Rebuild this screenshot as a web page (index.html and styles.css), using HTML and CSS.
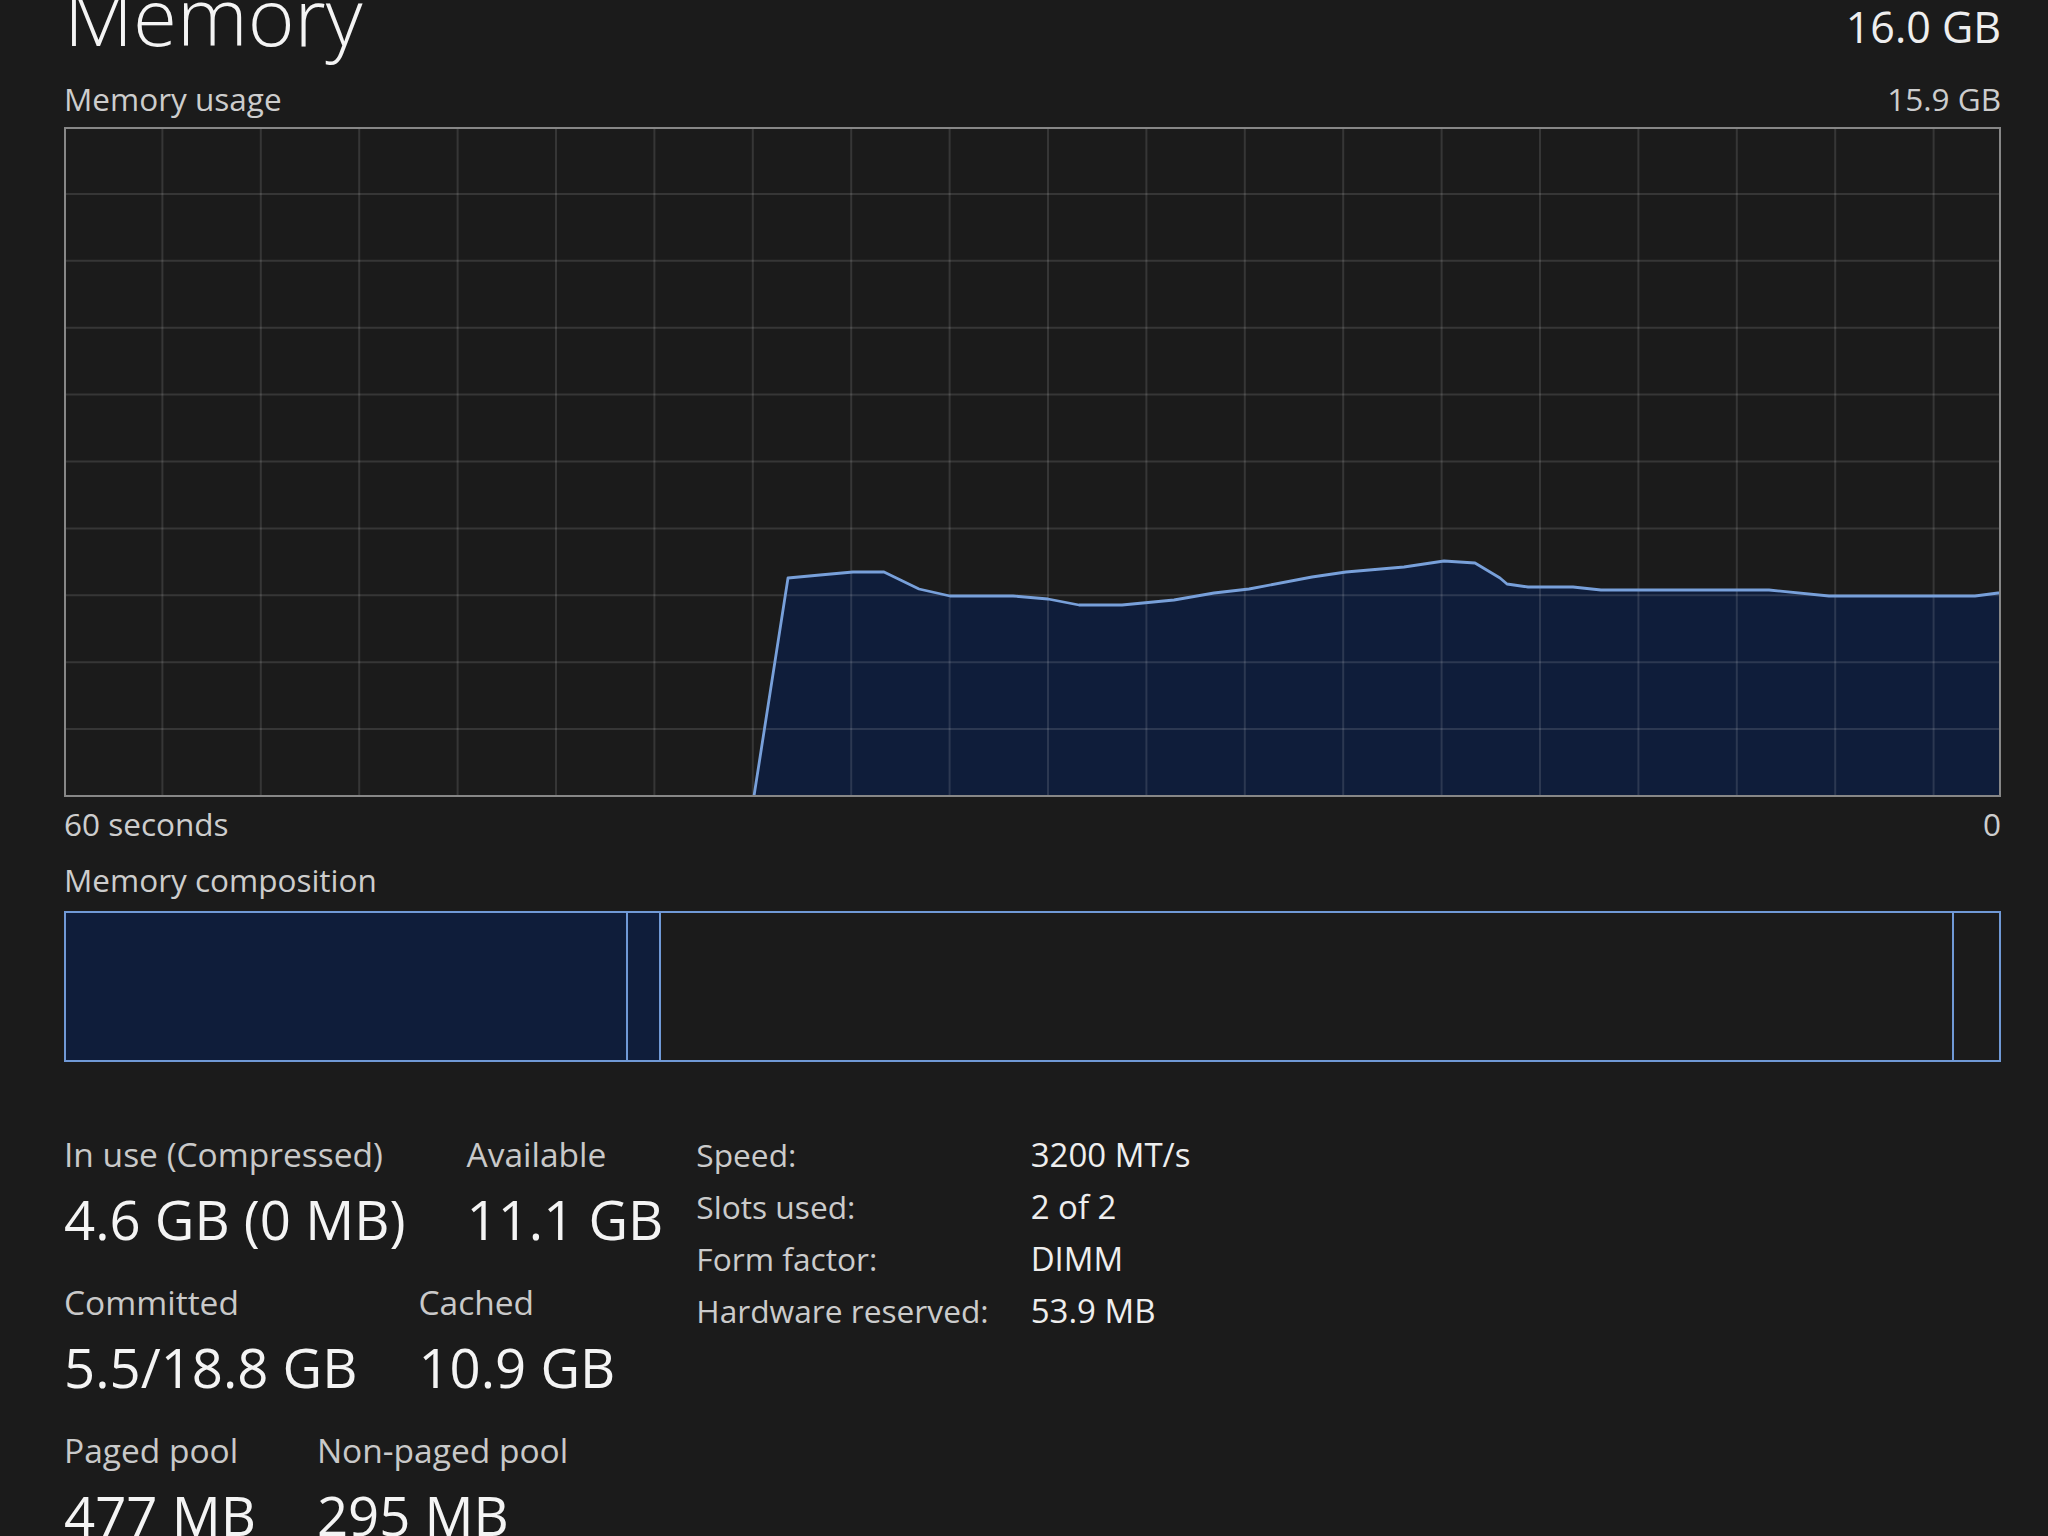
FILE: index.html
```html
<!DOCTYPE html>
<html lang="en">
<head>
<meta charset="utf-8">
<title>Memory</title>
<link rel="stylesheet" href="styles.css">
</head>
<body>
<div class="page">
  <header class="head">
    <h1 class="title">Memory</h1>
    <div class="total">16.0 GB</div>
  </header>

  <div class="axis-row usage-head">
    <span>Memory usage</span>
    <span>15.9 GB</span>
  </div>

  <svg class="chart" width="1937" height="670" viewBox="0 0 1937 670" xmlns="http://www.w3.org/2000/svg">
    <polygon class="area" points="690,669 724,451 756,448 789,445 820,445 855,462 886,469 949,469 984,472 1015,478 1058,478 1110,473 1150,466 1185,462 1248,450 1282,445 1340,440 1380,434 1411,436 1436,451 1443,457 1464,460 1509,460 1537,463 1705,463 1765,469 1911,469 1934,466 1936,466 1936,669"/>
    <g class="grid">
      <line x1="98.4" y1="2" x2="98.4" y2="668"/>
      <line x1="196.8" y1="2" x2="196.8" y2="668"/>
      <line x1="295.2" y1="2" x2="295.2" y2="668"/>
      <line x1="393.6" y1="2" x2="393.6" y2="668"/>
      <line x1="492" y1="2" x2="492" y2="668"/>
      <line x1="590.4" y1="2" x2="590.4" y2="668"/>
      <line x1="688.8" y1="2" x2="688.8" y2="668"/>
      <line x1="787.2" y1="2" x2="787.2" y2="668"/>
      <line x1="885.6" y1="2" x2="885.6" y2="668"/>
      <line x1="984" y1="2" x2="984" y2="668"/>
      <line x1="1082.4" y1="2" x2="1082.4" y2="668"/>
      <line x1="1180.8" y1="2" x2="1180.8" y2="668"/>
      <line x1="1279.2" y1="2" x2="1279.2" y2="668"/>
      <line x1="1377.6" y1="2" x2="1377.6" y2="668"/>
      <line x1="1476" y1="2" x2="1476" y2="668"/>
      <line x1="1574.4" y1="2" x2="1574.4" y2="668"/>
      <line x1="1672.8" y1="2" x2="1672.8" y2="668"/>
      <line x1="1771.2" y1="2" x2="1771.2" y2="668"/>
      <line x1="1869.6" y1="2" x2="1869.6" y2="668"/>
      <line x1="2" y1="66.9" x2="1935" y2="66.9"/>
      <line x1="2" y1="133.8" x2="1935" y2="133.8"/>
      <line x1="2" y1="200.7" x2="1935" y2="200.7"/>
      <line x1="2" y1="267.6" x2="1935" y2="267.6"/>
      <line x1="2" y1="334.5" x2="1935" y2="334.5"/>
      <line x1="2" y1="401.4" x2="1935" y2="401.4"/>
      <line x1="2" y1="468.3" x2="1935" y2="468.3"/>
      <line x1="2" y1="535.2" x2="1935" y2="535.2"/>
      <line x1="2" y1="602.1" x2="1935" y2="602.1"/>
    </g>
    <polyline class="trace" points="690,669 724,451 756,448 789,445 820,445 855,462 886,469 949,469 984,472 1015,478 1058,478 1110,473 1150,466 1185,462 1248,450 1282,445 1340,440 1380,434 1411,436 1436,451 1443,457 1464,460 1509,460 1537,463 1705,463 1765,469 1911,469 1934,466 1936,466"/>
    <rect class="frame" x="1" y="1" width="1935" height="668"/>
  </svg>

  <div class="axis-row time-row">
    <span>60 seconds</span>
    <span>0</span>
  </div>

  <div class="axis-row comp-head">
    <span>Memory composition</span>
  </div>

  <div class="composition">
    <div class="seg seg-filled" style="width:562px"></div>
    <div class="seg seg-filled" style="width:33px"></div>
    <div class="seg" style="width:1293px"></div>
    <div class="seg seg-last"></div>
  </div>

  <section class="stats">
    <div class="stats-left">
      <div class="stat-row">
        <div class="stat">
          <div class="stat-label">In use (Compressed)</div>
          <div class="stat-value">4.6 GB (0 MB)</div>
        </div>
        <div class="stat">
          <div class="stat-label">Available</div>
          <div class="stat-value">11.1 GB</div>
        </div>
      </div>
      <div class="stat-row">
        <div class="stat">
          <div class="stat-label">Committed</div>
          <div class="stat-value">5.5/18.8 GB</div>
        </div>
        <div class="stat">
          <div class="stat-label">Cached</div>
          <div class="stat-value">10.9 GB</div>
        </div>
      </div>
      <div class="stat-row">
        <div class="stat">
          <div class="stat-label">Paged pool</div>
          <div class="stat-value">477 MB</div>
        </div>
        <div class="stat">
          <div class="stat-label">Non-paged pool</div>
          <div class="stat-value">295 MB</div>
        </div>
      </div>
    </div>

    <div class="info">
      <div class="info-label">Speed:</div>
      <div class="info-value">3200 MT/s</div>
      <div class="info-label">Slots used:</div>
      <div class="info-value">2 of 2</div>
      <div class="info-label">Form factor:</div>
      <div class="info-value">DIMM</div>
      <div class="info-label">Hardware reserved:</div>
      <div class="info-value">53.9 MB</div>
    </div>
  </section>
</div>
</body>
</html>
```

FILE: styles.css
```css
html, body {
  margin: 0;
  padding: 0;
  background: #1b1b1b;
  height: 100%;
  overflow: hidden;
}

body {
  font-family: "Open Sans", "Noto Sans", sans-serif;
  color: #f2f2f2;
}

.page {
  padding: 0 47px 0 64px;
  display: flex;
  flex-direction: column;
}

.head {
  display: flex;
  justify-content: space-between;
  align-items: flex-start;
  height: 79px;
}

.title {
  margin: 0;
  font-size: 80px;
  font-weight: 300;
  line-height: 30px;
  color: #f4f4f4;
}

.total {
  font-size: 43px;
  line-height: 53px;
  color: #eeeeee;
}

.axis-row {
  display: flex;
  justify-content: space-between;
  font-size: 31.5px;
  line-height: 39px;
  color: #cdcdcd;
}

.chart {
  display: block;
  margin-top: 9px;
}

.chart .area {
  fill: #0f1d3a;
}

.chart .grid line {
  stroke: rgba(255, 255, 255, 0.12);
  stroke-width: 2;
}

.chart .trace {
  fill: none;
  stroke: #78a0da;
  stroke-width: 2.8;
  stroke-linejoin: round;
}

.chart .frame {
  fill: none;
  stroke: #878787;
  stroke-width: 2;
}

.time-row {
  margin-top: 7px;
}

.comp-head {
  margin-top: 17px;
}

.composition {
  margin-top: 12px;
  box-sizing: border-box;
  height: 151px;
  border: 2px solid #7099d6;
  display: flex;
}

.seg {
  box-sizing: border-box;
  border-right: 2px solid #7099d6;
  flex: none;
}

.seg-filled {
  background: #0f1d3a;
}

.seg-last {
  flex: 1;
  border-right: none;
}

.stats {
  margin-top: 68px;
  display: flex;
  align-items: flex-start;
  gap: 33px;
}

.stats-left {
  display: flex;
  flex-direction: column;
  gap: 18px;
}

.stat-row {
  display: flex;
  gap: 61px;
}

.stat-label {
  font-size: 33.5px;
  line-height: 48px;
  color: #c9c9c9;
  white-space: nowrap;
}

.stat-value {
  font-size: 54.5px;
  line-height: 82px;
  color: #f4f4f4;
  white-space: nowrap;
}

.info {
  display: grid;
  grid-template-columns: auto auto;
  column-gap: 42px;
  line-height: 52px;
  margin-top: -1px;
}

.info-label {
  font-size: 31.7px;
  color: #cbcbcb;
  white-space: nowrap;
}

.info-value {
  font-size: 33px;
  color: #eeeeee;
  white-space: nowrap;
}
```
